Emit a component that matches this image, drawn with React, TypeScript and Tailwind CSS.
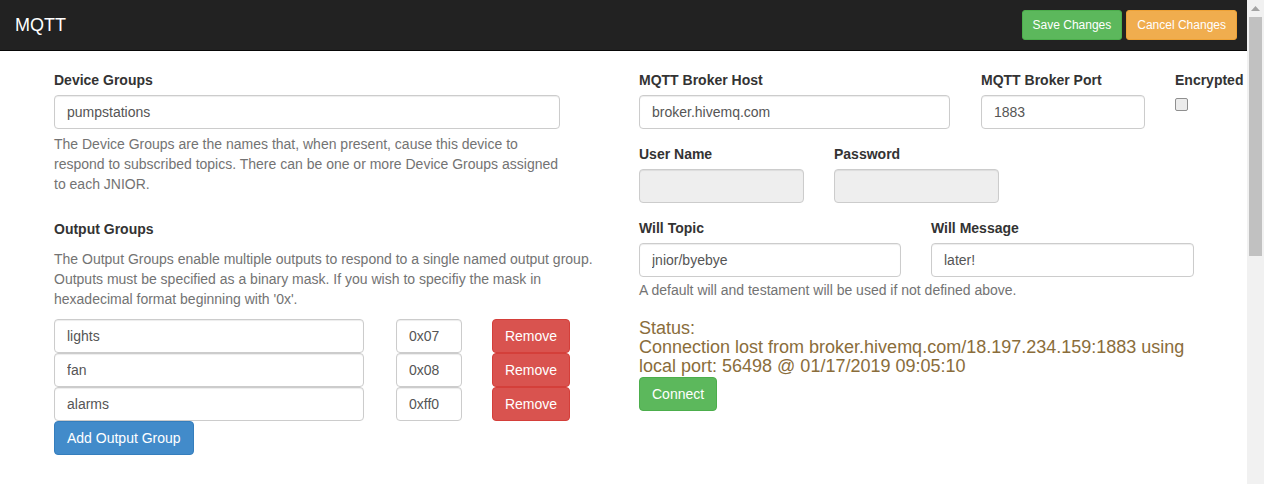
import React from 'react';

const inputCls =
  'h-[34px] rounded-[4px] border border-[#ccc] bg-white px-[12px] text-[14px] text-[#555] shadow-[inset_0_1px_1px_rgba(0,0,0,0.075)] outline-none';
const disabledCls =
  'h-[34px] rounded-[4px] border border-[#ccc] bg-[#eee] px-[12px] text-[14px] text-[#555] shadow-[inset_0_1px_1px_rgba(0,0,0,0.075)]';
const labelCls = 'block text-[14px] font-bold leading-[20px] text-[#333] mb-[5px]';
const helpCls = 'text-[14px] leading-[20px] text-[#737373]';

type Group = { name: string; mask: string };

const groups: Group[] = [
  { name: 'lights', mask: '0x07' },
  { name: 'fan', mask: '0x08' },
  { name: 'alarms', mask: '0xff0' },
];

const Field = ({ label, value, width }: { label: string; value: string; width: string }) => (
  <div>
    <label className={labelCls}>{label}</label>
    <input readOnly value={value} className={`${inputCls} ${width}`} />
  </div>
);

const DisabledField = ({ label, width }: { label: string; width: string }) => (
  <div>
    <label className={labelCls}>{label}</label>
    <div className={`${disabledCls} ${width}`} />
  </div>
);

export default function App() {
  return (
    <div
      className="flex h-[484px] w-[1264px] overflow-hidden bg-white"
      style={{ fontFamily: '"Liberation Sans", Arial, Helvetica, sans-serif' }}
    >
      <div className="flex min-w-0 flex-1 flex-col">
        {/* Top bar */}
        <header className="flex h-[51px] shrink-0 items-center justify-between border-b border-[#080808] bg-[#222] pl-[15px] pr-[10px]">
          <span className="text-[18px] leading-[20px] text-white">MQTT</span>
          <div className="flex gap-[4px]">
            <button className="h-[30px] rounded-[3px] border border-[#4cae4c] bg-[#5cb85c] px-[10px] text-[12px] text-white">
              Save Changes
            </button>
            <button className="h-[30px] rounded-[3px] border border-[#eea236] bg-[#f0ad4e] px-[10px] text-[12px] text-white">
              Cancel Changes
            </button>
          </div>
        </header>

        <main className="flex gap-[30px] pl-[54px] pt-[19px]">
          {/* Left column */}
          <section className="w-[555px] shrink-0">
            <label className={labelCls}>Device Groups</label>
            <input readOnly value="pumpstations" className={`${inputCls} w-[506px]`} />
            <p className={`${helpCls} mt-[5px] w-[506px]`}>
              The Device Groups are the names that, when present, cause this device to respond to subscribed
              topics. There can be one or more Device Groups assigned to each JNIOR.
            </p>

            <label className={`${labelCls} mt-[25px]`}>Output Groups</label>
            <p className={`${helpCls} mt-[10px]`}>
              The Output Groups enable multiple outputs to respond to a single named output group. Outputs must be
              specified as a binary mask. If you wish to specifiy the mask in hexadecimal format beginning with
              '0x'.
            </p>

            <div className="mt-[10px] flex flex-col">
              {groups.map((g) => (
                <div key={g.name} className="flex items-center">
                  <input readOnly value={g.name} className={`${inputCls} w-[310px]`} />
                  <input readOnly value={g.mask} className={`${inputCls} ml-[32px] w-[66px]`} />
                  <button className="ml-[30px] h-[34px] w-[78px] rounded-[4px] border border-[#d43f3a] bg-[#d9534f] text-[14px] text-white">
                    Remove
                  </button>
                </div>
              ))}
              <div>
                <button className="h-[34px] rounded-[4px] border border-[#357ebd] bg-[#428bca] px-[12px] text-[14px] text-white">
                  Add Output Group
                </button>
              </div>
            </div>
          </section>

          {/* Right column */}
          <section className="w-[555px] shrink-0">
            <div className="flex">
              <Field label="MQTT Broker Host" value="broker.hivemq.com" width="w-[311px]" />
              <div className="ml-[31px]">
                <Field label="MQTT Broker Port" value="1883" width="w-[164px]" />
              </div>
              <div className="ml-[30px] whitespace-nowrap">
                <label className={labelCls}>Encrypted</label>
                <span className="mt-[8px] block h-[13px] w-[13px] rounded-[2px] border border-[#8f8f8f] bg-[#ececec]" />
              </div>
            </div>

            <div className="mt-[15px] flex gap-[30px]">
              <DisabledField label="User Name" width="w-[165px]" />
              <DisabledField label="Password" width="w-[165px]" />
            </div>

            <div className="mt-[15px] flex gap-[30px]">
              <Field label="Will Topic" value="jnior/byebye" width="w-[262px]" />
              <Field label="Will Message" value="later!" width="w-[263px]" />
            </div>
            <p className={`${helpCls} mt-[3px]`}>A default will and testament will be used if not defined above.</p>

            <div className="mt-[19px] text-[18px] leading-[19px] text-[#8a6d3b]">
              <div>Status:</div>
              <div>Connection lost from broker.hivemq.com/18.197.234.159:1883 using local port: 56498 @ 01/17/2019 09:05:10</div>
            </div>
            <button className="mt-[1px] h-[34px] rounded-[4px] border border-[#4cae4c] bg-[#5cb85c] px-[12px] text-[14px] text-white">
              Connect
            </button>
          </section>
        </main>
      </div>

      {/* Browser scrollbar */}
      <div className="flex w-[17px] shrink-0 flex-col items-center bg-[#f1f1f1]">
        <div className="flex h-[17px] items-center justify-center">
          <svg width="9" height="5" viewBox="0 0 9 5">
            <path d="M0 5 L4.5 0 L9 5 Z" fill="#a3a3a3" />
          </svg>
        </div>
        <div className="h-[239px] w-[13px] bg-[#c1c1c1]" />
      </div>
    </div>
  );
}
